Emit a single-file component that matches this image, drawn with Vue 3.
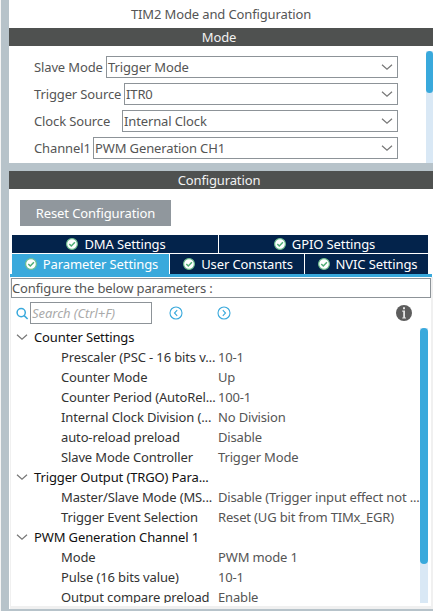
<script setup>
const modes = [
  { label: 'Slave Mode', value: 'Trigger Mode', w: 72 },
  { label: 'Trigger Source', value: 'ITR0', w: 90 },
  { label: 'Clock Source', value: 'Internal Clock', w: 88 },
  { label: 'Channel1', value: 'PWM Generation CH1', w: 59 },
]
const tabRows = [
  [{ t: 'DMA Settings', w: 206 }, { t: 'GPIO Settings', w: 209 }],
  [{ t: 'Parameter Settings', w: 157, active: true }, { t: 'User Constants', w: 134 }, { t: 'NVIC Settings', w: 123 }],
]
const rows = [
  { g: 'Counter Settings' },
  { k: 'Prescaler (PSC - 16 bits v...', v: '10-1' },
  { k: 'Counter Mode', v: 'Up' },
  { k: 'Counter Period (AutoRel...', v: '100-1' },
  { k: 'Internal Clock Division (...', v: 'No Division' },
  { k: 'auto-reload preload', v: 'Disable' },
  { k: 'Slave Mode Controller', v: 'Trigger Mode' },
  { g: 'Trigger Output (TRGO) Para...' },
  { k: 'Master/Slave Mode (MS...', v: 'Disable (Trigger input effect not ...' },
  { k: 'Trigger Event Selection', v: 'Reset (UG bit from TIMx_EGR)' },
  { g: 'PWM Generation Channel 1' },
  { k: 'Mode', v: 'PWM mode 1' },
  { k: 'Pulse (16 bits value)', v: '10-1' },
  { k: 'Output compare preload', v: 'Enable' },
]
</script>

<template>
  <div class="app">
    <section class="mode">
      <div class="title">TIM2 Mode and Configuration</div>
      <div class="bar">Mode</div>
      <div class="mode-body">
        <div class="fields">
          <div v-for="m in modes" :key="m.label" class="field">
            <label :style="{ width: m.w + 'px' }">{{ m.label }}</label>
            <div class="select">
              <span>{{ m.value }}</span>
              <svg class="chev" width="12" height="8" viewBox="0 0 12 8"><path d="M1 1.8 L6 6.3 L11 1.8" /></svg>
            </div>
          </div>
        </div>
        <div class="track mode-track"><div class="thumb mode-thumb"></div></div>
      </div>
    </section>

    <section class="config">
      <div class="bar">Configuration</div>
      <button class="reset">Reset Configuration</button>
      <div class="tabs">
        <div v-for="(r, i) in tabRows" :key="i" class="tab-row" :class="{ lower: i === 1 }">
          <div v-for="t in r" :key="t.t" class="tab" :class="{ active: t.active }" :style="{ width: t.w + 'px' }">
            <svg width="12" height="12" viewBox="0 0 12 12">
              <circle cx="6" cy="6" r="5.4" fill="#fff" stroke="#6fbf8e" stroke-width="1.2" />
              <path d="M3.3 6 L5.3 8 L8.9 4.3" fill="none" stroke="#4fae75" stroke-width="1.5" />
            </svg>
            <span>{{ t.t }}</span>
          </div>
        </div>
      </div>
      <div class="underline"></div>
      <div class="panel">
        <div class="note">Configure the below parameters :</div>
        <div class="search">
          <svg class="mag" width="13" height="13" viewBox="0 0 13 13"><circle cx="5.2" cy="5.6" r="4.1" /><path d="M8.2 8.6 L11.6 12" /></svg>
          <div class="input">Search (Ctrl+F)</div>
          <svg class="nav prev" width="14" height="14" viewBox="0 0 14 14"><circle cx="7" cy="7" r="6" /><path d="M8.2 4.2 L5.5 7 L8.2 9.8" /></svg>
          <svg class="nav next" width="14" height="14" viewBox="0 0 14 14"><circle cx="7" cy="7" r="6" /><path d="M5.8 4.2 L8.5 7 L5.8 9.8" /></svg>
          <svg class="info" width="16" height="16" viewBox="0 0 16 16">
            <circle cx="8" cy="8" r="8" fill="#5d5d5d" />
            <path d="M7 2.2h2v2H7z M6.2 5.6H9v6.9h1v1.1H6.2v-1.1h1V6.7h-1z" fill="#e4e4e4" />
          </svg>
        </div>
        <div class="tree-wrap">
          <div class="tree">
            <div v-for="(r, i) in rows" :key="i" class="row">
              <template v-if="r.g">
                <svg class="chev" width="12" height="8" viewBox="0 0 12 8"><path d="M1 1.8 L6 6.3 L11 1.8" /></svg>
                <span class="group">{{ r.g }}</span>
              </template>
              <template v-else>
                <span class="key">{{ r.k }}</span>
                <span class="val">{{ r.v }}</span>
              </template>
            </div>
          </div>
          <div class="track tree-track"><div class="thumb tree-thumb"></div></div>
        </div>
      </div>
    </section>
  </div>
</template>

<style>
body { background: #fff; overflow: hidden; }
</style>

<style scoped>
.app {
  box-sizing: border-box;
  width: 433px;
  height: 611px;
  display: flex;
  flex-direction: column;
  gap: 8px;
  background: #b7c3ca;
  border-left: 1px solid #f5f5f5;
  padding: 0 0 2px 8px;
  font: 13px/18px "Noto Sans", sans-serif;
  letter-spacing: -0.13px;
  color: #555;
  white-space: nowrap;
  overflow: hidden;
}
.mode { height: 163px; background: #fff; overflow: hidden; }
.title { height: 28px; line-height: 29px; text-align: center; }
.bar { height: 18px; line-height: 18px; background: #4f5150; color: #f2f2f2; text-align: center; padding-right: 4px; }
.mode-body { display: flex; justify-content: space-between; }
.fields { display: flex; flex-direction: column; gap: 5px; padding: 10px 0 0 25px; width: 364px; }
.field { display: flex; height: 22px; align-items: center; }
.field label { flex: none; }
.select { box-sizing: border-box; flex: 1; height: 22px; border: 1px solid #8d9398; display: flex; align-items: center; justify-content: space-between; padding: 0 4px 0 1px; }
.chev { flex: none; fill: none; stroke: #777; stroke-width: 1.2; }
.track { background: #d9e8f5; flex: none; }
.thumb { background: #39a9dc; }
.mode-track { width: 7px; height: 112px; margin-top: 5px; }
.mode-thumb { height: 42px; border-radius: 4px; }
.config { height: 438px; background: #fff; display: flex; flex-direction: column; }
.reset { margin: 11px 0 9px 11px; width: 151px; height: 26px; flex: none; border: 0; padding: 0; background: #90979d; color: #fff; font: inherit; letter-spacing: -0.1px; }
.tabs { display: flex; flex-direction: column; gap: 1px; padding-left: 3px; }
.tab-row { display: flex; gap: 1px; height: 18px; }
.tab-row.lower { height: 20px; }
.tab { box-sizing: border-box; display: flex; align-items: center; justify-content: center; gap: 6px; padding-left: 2px; background: #03234b; color: #fff; letter-spacing: -0.1px; }
.tab.active { background: #39a9dc; }
.underline { height: 3px; margin: 0 1px; background: #39a9dc; }
.panel { flex: 1; min-height: 0; margin: 0 0 0 1px; border: 1px solid #f0f0f0; border-right-width: 2px; border-bottom-width: 3px; border-top: 0; padding-top: 1px; display: flex; flex-direction: column; }
.note { box-sizing: border-box; height: 20px; flex: none; border: 1px solid #8d9398; line-height: 19px; }
.search { display: flex; align-items: center; height: 22px; margin-top: 4px; flex: none; }
.mag { margin: 0 1px 0 5px; fill: none; stroke: #39a9dc; stroke-width: 1.5; }
.input { box-sizing: border-box; width: 122px; height: 22px; border: 1px solid #8d9398; line-height: 20px; padding-left: 1px; font-style: italic; color: #aaa; letter-spacing: -0.05px; }
.nav { fill: none; stroke: #39a9dc; stroke-width: 1.1; }
.prev { margin-left: 17px; }
.next { margin-left: 34px; }
.info { margin-left: 165px; }
.tree-wrap { display: flex; justify-content: space-between; height: 279px; overflow: hidden; }
.tree { padding-top: 3px; width: 408px; }
.row { height: 20px; line-height: 20px; display: flex; align-items: center; padding-left: 5px; }
.group { color: #111; margin-left: 6px; }
.key { box-sizing: border-box; flex: none; width: 202px; padding-left: 45px; color: #333; }
.val { letter-spacing: -0.16px; }
.tree-track { width: 8px; height: 275px; margin: 4px 3px 0 0; }
.tree-thumb { height: 236px; border-radius: 4px; }
</style>
